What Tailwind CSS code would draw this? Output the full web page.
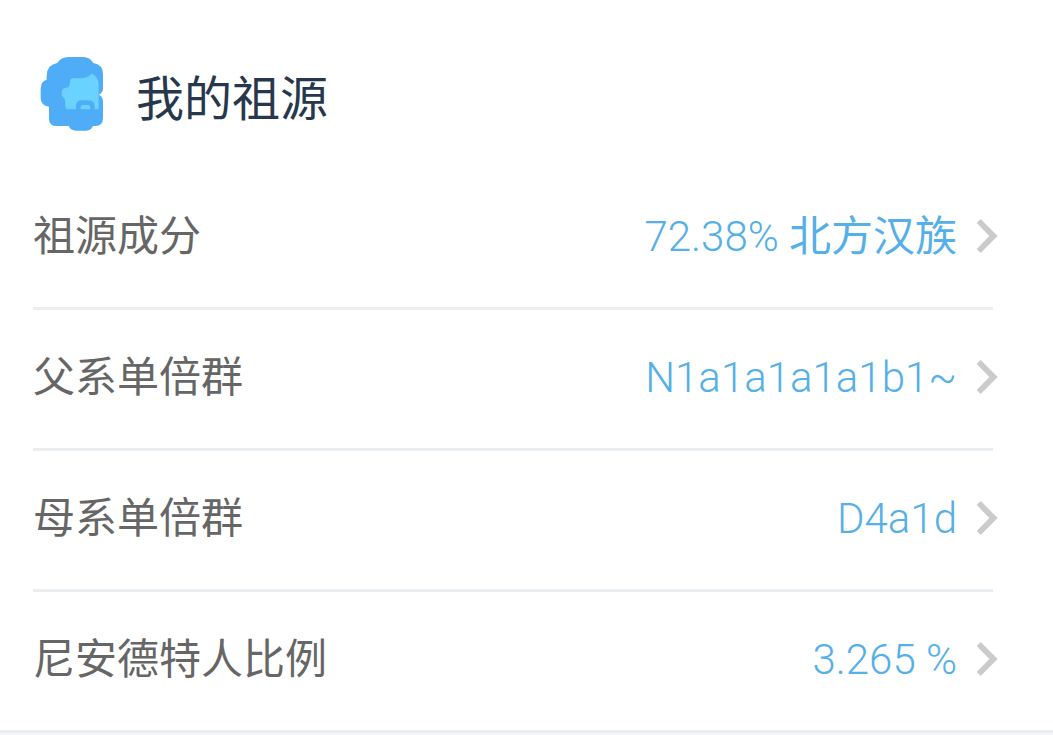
<!DOCTYPE html>
<html lang="zh-CN">
<head>
<meta charset="utf-8">
<meta name="viewport" content="width=device-width, initial-scale=1">
<title>我的祖源</title>
<script src="https://cdn.jsdelivr.net/npm/@tailwindcss/browser@4"></script>
</head>
<body class="bg-[#f1f5f9] font-['Roboto','Noto_Sans_CJK_SC',sans-serif]">
<section class="border-b-3 border-[#ebeef2] bg-white pt-14">
<header class="flex items-center gap-8 px-10 h-19">
<svg class="w-16 h-19 shrink-0" viewBox="30 18 192 228" aria-hidden="true">
<path fill="#4fadf8" d="M116 21H160Q180 21 190 39Q219 44 219 72V116Q219 127 207 134Q219 141 219 154V204Q219 228 196 228H189Q183 242 168 242H138Q122 242 116 228H80Q57 228 57 206V170Q32 167 32 144V116Q32 94 50 89V78Q50 44 82 39Q92 21 116 21Z"/>
<path fill="#6ad2ff" d="M120 96Q120 85 130 85H150Q176 85 186 70Q206 85 206 102V178H194V170Q194 151 176 151H156Q138 151 138 168V178H114Q106 178 106 168Q106 156 104 146Q94 140 95 126Q97 113 110 113Q120 112 120 96ZM152 178V170Q152 165 158 165H174Q180 165 180 170V178Z"/>
</svg>
<h1 class="pt-3 text-5xl text-[#27384d]">我的祖源</h1>
</header>
<ul class="mt-[37px] pl-[33px] pr-[60px] text-[42px] font-light">
<li class="border-b-3 border-[#ebeef0]"><a href="#" class="-mr-[5px] flex h-[138px] items-center gap-[19px] pb-1"><span class="mr-auto font-normal text-[#666]">祖源成分</span><span class="text-[#55afe8]">72.38% <span class="font-normal">北方汉族</span></span><svg class="h-9 w-[22px]" viewBox="48 38 66 108" fill="#cbcbcb" aria-hidden="true"><path d="M62 41L113 92L62 143L50 131L88 92L50 53Z"/></svg></a></li>
<li class="border-b-3 border-[#ebeef0]"><a href="#" class="-mr-[5px] flex h-[138px] items-center gap-[19px] pb-1"><span class="mr-auto font-normal text-[#666]">父系单倍群</span><span class="text-[#55afe8]">N1a1a1a1a1b1~</span><svg class="h-9 w-[22px]" viewBox="48 38 66 108" fill="#cbcbcb" aria-hidden="true"><path d="M62 41L113 92L62 143L50 131L88 92L50 53Z"/></svg></a></li>
<li class="border-b-3 border-[#ebeef0]"><a href="#" class="-mr-[5px] flex h-[138px] items-center gap-[19px] pb-1"><span class="mr-auto font-normal text-[#666]">母系单倍群</span><span class="text-[#55afe8]">D4a1d</span><svg class="h-9 w-[22px]" viewBox="48 38 66 108" fill="#cbcbcb" aria-hidden="true"><path d="M62 41L113 92L62 143L50 131L88 92L50 53Z"/></svg></a></li>
<li><a href="#" class="-mr-[5px] flex h-[138px] items-center gap-[19px] pb-1"><span class="mr-auto font-normal text-[#666]">尼安德特人比例</span><span class="text-[#55afe8]">3.265 %</span><svg class="h-9 w-[22px]" viewBox="48 38 66 108" fill="#cbcbcb" aria-hidden="true"><path d="M62 41L113 92L62 143L50 131L88 92L50 53Z"/></svg></a></li>
</ul>
</section>
</body>
</html>
